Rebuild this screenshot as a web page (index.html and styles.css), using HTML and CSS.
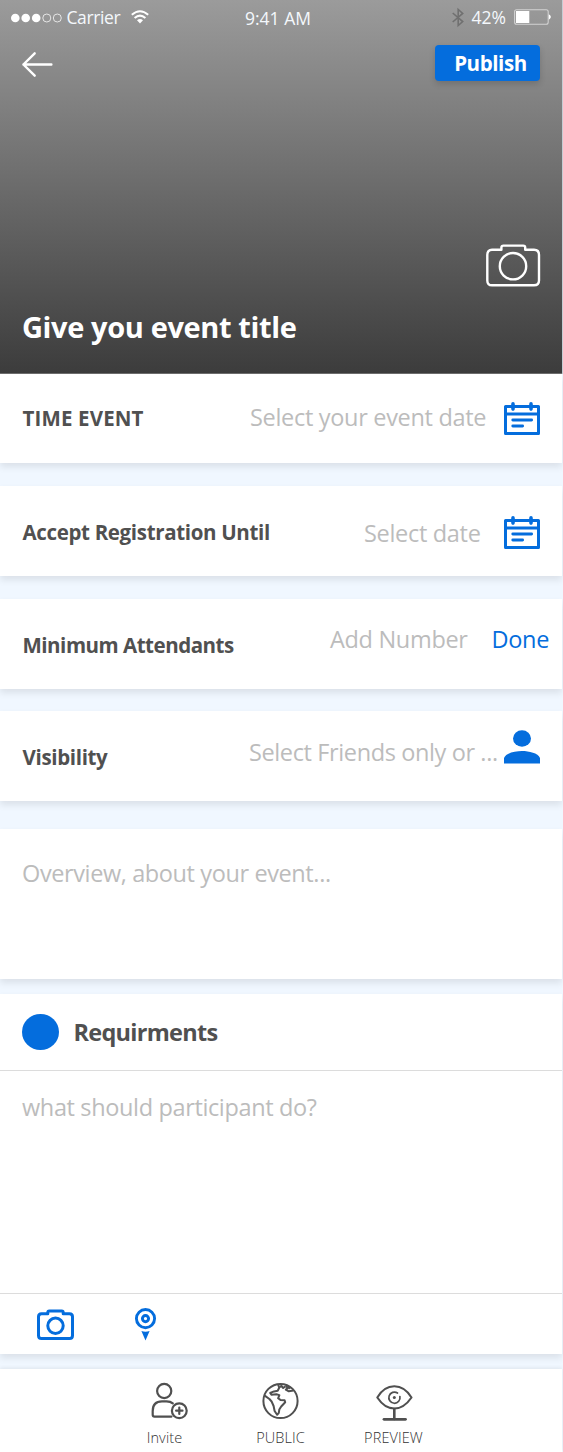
FILE: index.html
```html
<!DOCTYPE html>
<html lang="en">
<head>
<meta charset="utf-8">
<title>Create event</title>
<link rel="stylesheet" href="styles.css">
</head>
<body>
<svg class="defs" width="0" height="0">
  <symbol id="calendar" viewBox="0 0 36 33">
    <path fill="none" stroke="currentColor" stroke-width="3" stroke-linejoin="round" d="M1.5 4.500h33v27h-33zM1 12h34"/>
    <path fill="none" stroke="currentColor" stroke-width="3.600" stroke-linecap="round" d="M9 1.900v5.200M27 1.900v5.200"/>
    <path fill="none" stroke="currentColor" stroke-width="2.900" stroke-linecap="round" d="M8.800 18h18.800M8.800 24h9.800"/>
  </symbol>
</svg>
<main class="screen">
  <header class="hero">
    <div class="status">
      <svg class="signal" width="52" height="10" viewBox="0 0 52 10"><g fill="#fff"><circle cx="5.300" cy="5" r="4.300"/><circle cx="15.700" cy="5" r="4.300"/><circle cx="26.200" cy="5" r="4.300"/></g><g fill="none" stroke="#e6e6e6" stroke-width="1"><circle cx="36.800" cy="5" r="4"/><circle cx="47.300" cy="5" r="4"/></g></svg>
      <span class="carrier">Carrier</span>
      <svg class="wifi" width="18" height="14" viewBox="0 0 18 14"><path fill="none" stroke="#fff" stroke-width="2" d="M.8 4.800Q9-2.300 17.200 4.800M3.600 8Q9 3.300 14.400 8"/><path fill="#fff" d="M6 10.300Q9 7.800 12 10.300L9 13.500z"/></svg>
      <span class="clock">9:41 AM</span>
      <svg class="bluetooth" width="12" height="19" viewBox="0 0 12 19"><path fill="none" stroke="#707070" stroke-width="1.600" d="M.7 5l10 8.600L6.200 17.500V1.500L10.700 5.400.700 14"/></svg>
      <span class="percent">42%</span>
      <svg class="battery" width="37" height="16" viewBox="0 0 37 16"><rect x=".6" y=".8" width="33.600" height="14.400" rx="2" fill="none" stroke="#d2d2d2" stroke-width="1.100"/><path fill="#fff" d="M2 2h13.300v12H2zM34.800 5.300q4.200 2.700 0 5.400z"/></svg>
    </div>
    <div class="toolbar">
      <svg class="back" width="31" height="25" viewBox="0 0 31 25"><path fill="none" stroke="#fff" stroke-width="2.400" stroke-linecap="round" stroke-linejoin="round" d="M12.700 1.300L1.400 12.500l11.300 11.200M1.400 12.500h28"/></svg>
      <button class="publish">Publish</button>
    </div>
    <svg class="cover-camera" width="55" height="43" viewBox="0 0 55 43"><path fill="none" stroke="#fff" stroke-width="2.400" stroke-linejoin="round" d="M6 5.800h9.400V3.600q0-2 2-2h19.800q2 0 2 2v2.200H48q5 0 5 5V36.500q0 4.800-5 4.800H6q-4.700 0-4.700-4.800V10.800q0-5 4.700-5z"/><circle cx="27" cy="22.200" r="13.200" fill="none" stroke="#fff" stroke-width="2.400"/></svg>
    <h1 class="title">Give you event title</h1>
  </header>

  <section class="field time">
    <span class="label">TIME EVENT</span><span class="hint">Select your event date</span>
    <svg class="icon" width="36" height="33"><use href="#calendar"/></svg>
  </section>
  <section class="field until">
    <span class="label">Accept Registration Until</span><span class="hint">Select date</span>
    <svg class="icon" width="36" height="33"><use href="#calendar"/></svg>
  </section>
  <section class="field minimum">
    <span class="label">Minimum Attendants</span><span class="hint">Add Number</span><span class="hint done">Done</span>
  </section>
  <section class="field visibility">
    <span class="label">Visibility</span><span class="hint">Select Friends only or ...</span>
    <svg class="icon" width="36" height="34" viewBox="0 0 36 34"><ellipse cx="18" cy="8.500" rx="9" ry="8.300" fill="currentColor"/><path fill="currentColor" d="M0 33.500V28C2 23 11 21 18 21s16 2 18 7v5.500z"/></svg>
  </section>
  <section class="overview"><span class="hint">Overview, about your event...</span></section>

  <section class="requirements">
    <div class="req-head"><span class="dot"></span><h2 class="req-title">Requirments</h2></div>
    <div class="req-body"><span class="hint">what should participant do?</span></div>
    <div class="attach">
      <svg width="37" height="31" viewBox="0 0 37 31"><path fill="none" stroke="currentColor" stroke-width="3" stroke-linejoin="round" d="M4.500 4.800h6.300V3.400q0-1.500 1.500-1.500h12.400q1.500 0 1.500 1.500v1.400h6.300q3 0 3 3V26.500q0 3-3 3h-28q-3 0-3-3V7.800q0-3 3-3z"/><circle cx="18.500" cy="16.800" r="7.700" fill="none" stroke="currentColor" stroke-width="3"/></svg>
      <svg class="pin" width="22" height="33" viewBox="0 0 22 33"><circle cx="10.500" cy="10.600" r="9.100" fill="none" stroke="currentColor" stroke-width="2.900"/><circle cx="10.500" cy="10.600" r="3.100" fill="none" stroke="currentColor" stroke-width="2.900"/><path fill="currentColor" d="M6.400 23q4 1.400 8.200 0L10.500 32.500z"/></svg>
    </div>
  </section>

  <nav class="tabs">
    <a class="tab invite">
      <svg width="37" height="38" viewBox="0 0 37 38"><g fill="none" stroke="currentColor" stroke-width="2.200" stroke-linecap="round" stroke-linejoin="round"><circle cx="13.200" cy="9" r="7.100"/><path d="M20.500 34.600H3.500q-1.800 0-1.800-1.800V29Q1.700 19.400 11 19.400h4.500q4 0 6.300 2"/><circle cx="28.300" cy="28.700" r="7.400"/><path d="M28.300 25.500v6.400M25.100 28.700h6.400"/></g></svg>
      <span>Invite</span>
    </a>
    <a class="tab public">
      <svg width="37" height="38" viewBox="0 0 37 38"><g fill="none" stroke="currentColor" stroke-width="2" stroke-linejoin="round"><circle cx="18.500" cy="19" r="17.100"/><path d="M16 2.200l1.200 3.500-1.500 3-3.700.7-3.800 1.600 1.200 1.800 5-.500 3 .8-1.300 3.200 2.300 1.600 4.200.3.600 2-4 4.300-1.900 3-.5 3.300-1.700 2-2.500-3.800-1-5-2-4.500-2.200-2.500-4.700-3.400"/><path d="M17.500 5l2-1 1.700 2 2-1.500M23.500 4.200l2.300 1.500-2 2 3 1.600 4.700-.7M26 4.300l1.800 2.500"/></g></svg>
      <span>PUBLIC</span>
    </a>
    <a class="tab preview">
      <svg width="37" height="38" viewBox="0 0 37 38"><g fill="none" stroke="currentColor" stroke-width="2.100" stroke-linecap="round" stroke-linejoin="round"><path d="M1.300 15.500Q8 4.300 18.300 4.300T35.500 15.500Q28 26.500 18.300 26.500T1.300 15.500z"/><path d="M21.500 11A5.600 5.600 0 1 0 23.900 14.500" stroke-width="1.700"/><path d="M18.300 27v10" stroke-width="2.600"/><path d="M8 37.300h21.500" stroke-width="2.800"/></g><circle cx="18.300" cy="15.400" r="1.500" fill="currentColor"/></svg>
      <span>PREVIEW</span>
    </a>
  </nav>
</main>
</body>
</html>
```
FILE: styles.css
```css
* { box-sizing: border-box; }
body { margin: 0; background: #f0f7ff; font-family: "Open Sans", "Noto Sans", sans-serif; color: #505050; }
svg { display: block; flex: none; overflow: visible; }
.defs { position: absolute; }
.screen { width: 562px; height: 1452px; display: flex; flex-direction: column; }

.hero { height: 374px; flex: none; background: linear-gradient(#9b9b9b, #3c3c3c); border-bottom: 1px solid #6e6e6e; display: flex; flex-direction: column; color: #fff; box-shadow: 1px 0 #c5ccd3; }
.status { height: 36px; display: flex; align-items: flex-start; padding: 0 0 0 10px; font-size: 17.5px; line-height: 24px; color: #f4f8fc; white-space: nowrap; }
.signal { margin-top: 13px; }
.carrier { margin: 5px 0 0 4.5px; width: 64.5px; letter-spacing: -0.4px; }
.wifi { margin-top: 9.5px; }
.clock { margin: 6px 0 0 96px; width: 207px; }
.bluetooth { margin-top: 8px; }
.percent { margin: 5px 0 0 7.5px; width: 42px; }
.battery { margin-top: 9px; }
.toolbar { display: flex; justify-content: space-between; padding: 9px 22px 0; }
.back { margin-top: 7px; }
.publish { width: 105px; height: 36px; border: 0; border-radius: 4px; background: #046ddd; color: #fff; font: 700 20.5px/36px "Open Sans", "Noto Sans", sans-serif; letter-spacing: -0.4px; padding: 0 0 0 6px; box-shadow: 0 3px 6px rgba(0, 0, 0, .16); }
.cover-camera { margin: 163px 21px 0 auto; }
.title { margin: 20px 0 0 22px; font-size: 29px; line-height: 40px; letter-spacing: -0.38px; font-weight: 700; }

.field, .overview, .requirements { flex: none; background: #fff; box-shadow: 0 4px 7px rgba(0, 0, 0, .09); }
.field { display: grid; align-items: start; height: 90px; padding-left: 22px; margin-bottom: 22.5px; color: #046ddd; white-space: nowrap; }
.label { margin: 32px 0 0 .5px; font-size: 20.5px; line-height: 28px; font-weight: 700; color: #505050; letter-spacing: -0.34px; }
.hint { font-size: 23.5px; line-height: 32px; color: #bcbcbc; letter-spacing: -0.31px; }
.time { grid-template-columns: 228px 254px 36px; height: 89px; margin-bottom: 23px; }
.time .label { margin-top: 30px; letter-spacing: .15px; }
.time .hint { margin-top: 27px; }
.time .icon { margin-top: 28px; }
.until { grid-template-columns: 342px 140px 36px; }
.until .hint { margin-top: 31px; }
.until .icon { margin-top: 30px; }
.minimum { grid-template-columns: 308px 161.5px 70px; }
.minimum .label { letter-spacing: -.48px; }
.minimum .hint { margin-top: 24px; }
.minimum .done { color: #046ddd; }
.visibility { grid-template-columns: 227px 255px 36px; margin-bottom: 27.5px; }
.visibility .hint { margin-top: 25px; letter-spacing: -.38px; }
.visibility .icon { margin-top: 19px; }
.overview { height: 150px; padding: 28px 22px; margin-bottom: 15.5px; }
.overview .hint { letter-spacing: -.39px; }
.requirements { height: 360px; margin-bottom: 15px; display: flex; flex-direction: column; color: #046ddd; }
.req-head { height: 76.5px; display: flex; align-items: center; padding-left: 22px; gap: 14.5px; border-bottom: 1px solid #dcdcdc; }
.dot { width: 37px; height: 36px; border-radius: 50%; background: #046ddd; }
.req-title { margin: 1px 0 0; font-size: 23.5px; line-height: 32px; color: #505050; letter-spacing: -.72px; }
.req-body { flex: 1; padding: 20.5px 22px; }
.req-body .hint { letter-spacing: -.36px; }
.attach { height: 61px; border-top: 1px solid #dcdcdc; display: flex; gap: 61px; padding: 15px 0 0 37px; }
.pin { margin-top: -1px; }

.tabs { flex: 1; background: #fff; box-shadow: 0 -1px 4px rgba(0, 0, 0, .08); display: flex; padding: 13px 0 0 127px; }
.tab { display: flex; flex-direction: column; align-items: center; width: 75px; font-size: 14.5px; line-height: 20px; font-weight: 300; gap: 8px; }
.invite svg { margin-left: 9px; }
.public { margin-left: 41px; }
.preview { margin-left: 38px; }
.preview svg { margin-left: 2px; }
.tab span { letter-spacing: .1px; color: #333; }
```
